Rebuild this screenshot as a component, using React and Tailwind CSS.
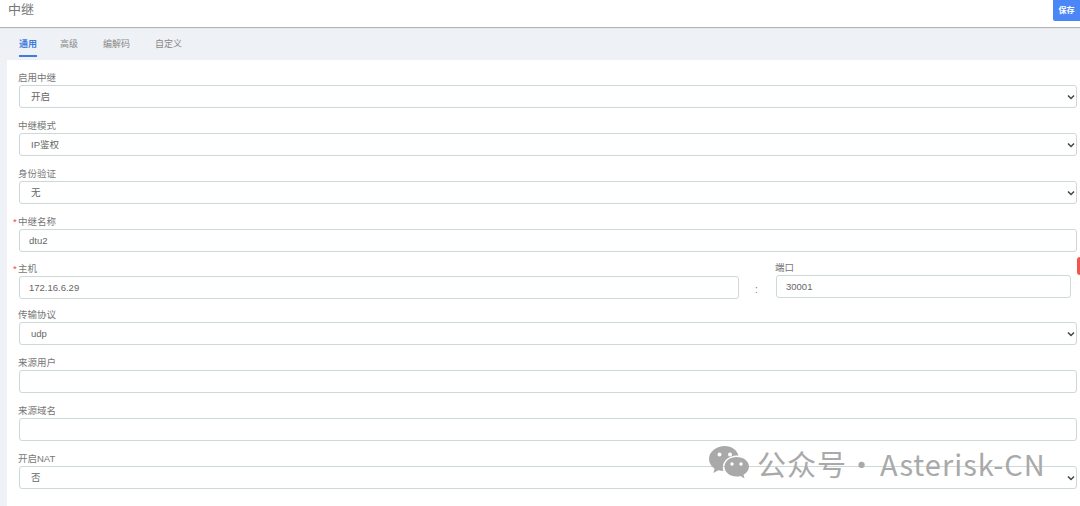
const font = { fontFamily: '"Liberation Sans", "Noto Sans CJK SC", sans-serif' };

const boxClass =
  "block h-[23px] w-full rounded-[3px] border border-[#ccd9d6] bg-white text-[9.5px] leading-[21px] text-[#666] outline-none";

function Label({ children, required }) {
  return (
    <label className="relative -ml-px block h-[14px] text-[9.5px] leading-[14px] text-[#777]">
      {required ? <span className="absolute left-[-5px] top-0 text-[#f04a4a]">*</span> : null}
      {children}
    </label>
  );
}

function SelectField({ label, value, className = "mb-[11px]" }) {
  return (
    <div className={className}>
      <Label>{label}</Label>
      <div className="relative">
        <select defaultValue={value} className={`${boxClass} appearance-none pl-[11px]`}>
          <option>{value}</option>
        </select>
        <svg
          className="pointer-events-none absolute top-[9px] right-[2px]"
          width="8"
          height="6"
          viewBox="0 0 8 6"
          fill="none"
          stroke="#444"
          strokeWidth="1.500"
        >
          <path d="M1 1.500l3 3 3-3" />
        </svg>
      </div>
    </div>
  );
}

function InputField({ label, value = "", required, className = "mb-[11px]" }) {
  return (
    <div className={className}>
      <Label required={required}>{label}</Label>
      <input readOnly value={value} className={`${boxClass} px-[9px]`} />
    </div>
  );
}

function WeChatIcon() {
  return (
    <svg width="41" height="34" viewBox="0 0 41 34" fill="#a9a9a9">
      <path d="M16 0C7.500 0 0 5.600 0 13c0 4 2.300 7.400 5.600 9.700L4.400 27l5-2.700c1.600.5 3.300.8 5 .8-.4-1.200-.6-2.400-.6-3.600C13.800 14.500 20 9.500 27.500 9.500c.7 0 1.300 0 2 .1C28 4 22.500 0 16 0z" />
      <path d="M27.500 11C21 11 15.500 15.200 15.500 20.800s5.500 9.800 12 9.800c1.400 0 2.700-.2 4-.6l4 2.500-1-3.700c3.200-1.900 5.500-4.800 5.500-8 0-5.600-5.500-9.800-12.500-9.800z" />
      <circle cx="10.500" cy="8.500" r="2" fill="#fff" />
      <circle cx="21" cy="8.500" r="2" fill="#fff" />
      <circle cx="23" cy="18" r="1.700" fill="#fff" />
      <circle cx="32" cy="18" r="1.700" fill="#fff" />
    </svg>
  );
}

export default function App() {
  return (
    <div className="relative h-[506px] w-[1080px] overflow-hidden bg-[#eef1f5]" style={font}>
      <header className="flex h-[27px] items-start justify-between bg-white shadow-[0_1px_1px_#b5b5b5]">
        <h1 className="pl-2 pt-[2px] text-[13px] leading-[16px] font-normal text-[#777]">中继</h1>
        <button className="h-[21px] w-[27px] rounded-bl-[2px] bg-[#4a86f5] text-[8px] font-bold text-white">保存</button>
      </header>

      <nav className="flex h-[33px] pl-[19px] text-[9px] text-[#888]">
        <span className="mt-[11px] h-[19px] w-[18px] border-b-2 border-[#3f7be0] font-bold whitespace-nowrap text-[#3f7be0]">通用</span>
        <span className="mt-[11px] ml-[23px]">高级</span>
        <span className="mt-[11px] ml-[25px]">编解码</span>
        <span className="mt-[11px] ml-[25px]">自定义</span>
      </nav>

      <main className="ml-[7px] h-[446px] bg-white pt-[11px] pr-[3px] pl-[12px]">
        <SelectField label="启用中继" value="开启" />
        <SelectField label="中继模式" value="IP鉴权" />
        <SelectField label="身份验证" value="无" />
        <InputField label="中继名称" value="dtu2" required className="mb-[9px]" />
        <div className="mb-[9px] flex items-end">
          <InputField label="主机" value="172.16.6.29" required className="w-[720px] shrink-0" />
          <span className="w-[37px] shrink-0 pr-[2px] text-center text-[10px] leading-[18px] text-[#777]">:</span>
          <InputField label="端口" value="30001" className="mb-[1px] w-[295px] shrink-0" />
        </div>
        <SelectField label="传输协议" value="udp" />
        <InputField label="来源用户" />
        <InputField label="来源域名" />
        <SelectField label="开启NAT" value="否" className="" />
      </main>

      {/* overlays */}
      <div className="absolute top-[257px] right-0 h-[18px] w-[3px] rounded-l-[3px] bg-[#f2564b]" />
      <div className="pointer-events-none absolute top-[446px] left-[709px] flex items-center gap-[7px]">
        <WeChatIcon />
        <span
          className="text-[29px] leading-[34px] tracking-[1px] whitespace-nowrap text-[#a9a9a9]"
          style={{ fontFamily: '"Noto Sans CJK SC", "Noto Sans", sans-serif' }}
        >
          公众号<span className="mr-[3px]">·</span>Asterisk-CN
        </span>
      </div>
    </div>
  );
}
